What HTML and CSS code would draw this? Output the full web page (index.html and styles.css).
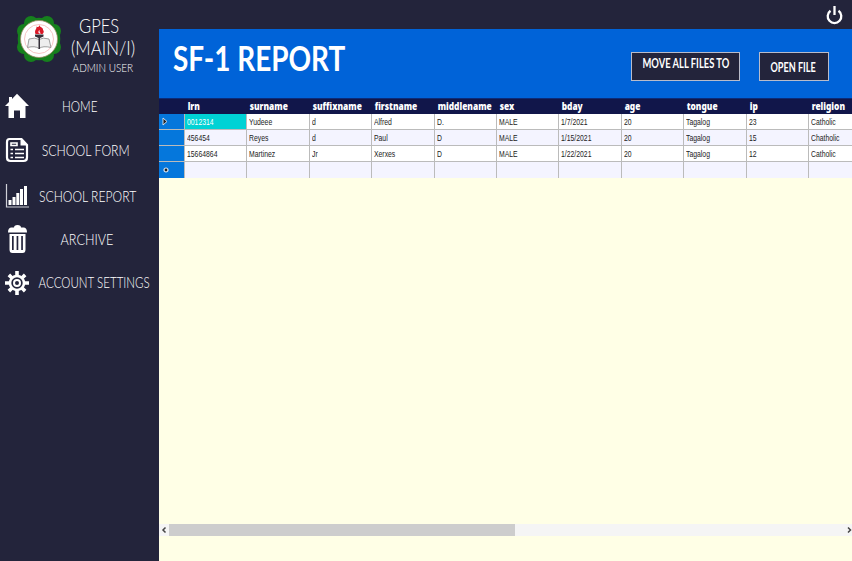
FILE: index.html
```
<!DOCTYPE html>
<html lang="en">
<head>
<meta charset="utf-8">
<title>SF-1 Report</title>
<link rel="stylesheet" href="styles.css">
</head>
<body>
<div class="app">
  <aside class="sidebar">
    <header class="profile">
      <svg class="logo" width="44" height="48" viewBox="0 0 44 48">
        <g fill="#16801d"><circle cx="22" cy="24" r="21.300"/><circle cx="14" cy="8" r="7"/><circle cx="30" cy="8" r="7"/><circle cx="7" cy="16" r="7"/><circle cx="37" cy="16" r="7"/><circle cx="7" cy="32" r="7"/><circle cx="37" cy="32" r="7"/><circle cx="14" cy="40" r="7"/><circle cx="30" cy="40" r="7"/></g>
        <circle cx="22" cy="24" r="18.500" fill="#fff" stroke="#a28b68" stroke-width=".8"/>
        <circle cx="22" cy="24" r="14.500" fill="none" stroke="#f5b5b5" stroke-width=".8"/>
        <path d="M12 24Q18 22 22 24.500Q26 22 32 24L34 32.500Q26 30.500 22 33.500Q18 30.500 10.500 32.500Z" fill="#eee" stroke="#888" stroke-width=".8"/>
        <path d="M18 19.500h8.500V21.500L23 23V34h-1.500V23L18 21.500Z" fill="#353039"/>
        <path d="M18.500 19C17 15 20 14 19.500 11.500C22 13 22 11 22.500 10C23 13 26.500 12 26 15C27.500 16.500 26.500 18 25.500 19Z" fill="#d91928"/>
        <path d="M22 18.500q-1.500-2 .5-3.500q-.5 2 1.500 3.500" fill="#fff"/>
      </svg>
      <div class="who">
        <span class="fit gpes">GPES</span>
        <span class="fit main">(MAIN/I)</span>
        <span class="fit admin">ADMIN USER</span>
      </div>
    </header>
    <nav class="nav">
      <a class="item"><svg class="icon" viewBox="0 0 24 26"><path fill="#fff" d="M12 .8L24 13H20.500V25H15V17.500H9V25H3.500V13H0L4 9V4H7V6Z"/></svg><span class="label"><span class="fit home">HOME</span></span></a>
      <a class="item"><svg class="icon" viewBox="0 0 24 26"><path d="M4.500 2H16.500L22 8V20.500Q22 24 18.500 24H5.500Q2 24 2 20.500V5Q2 2 4.500 2Z" fill="none" stroke="#fff" stroke-width="2.200"/><path d="M15.500 1.500V8.500H23Z" fill="#fff"/><path d="M6 6H12V8.500H6ZM5.500 12.500H8M10 12.500H19M5.500 16.500H8M10 16.500H19M5.500 20.500H8M10 20.500H19" fill="none" stroke="#fff" stroke-width="1.600"/></svg><span class="label"><span class="fit form">SCHOOL FORM</span></span></a>
      <a class="item"><svg class="icon chart" viewBox="0 0 24 26"><path d="M1.500 1V24H24" fill="none" stroke="#cfd0d8" stroke-width="1.200"/><path fill="#fff" d="M3.500 17h3v5h-3zM7.500 14h3v8h-3zM11.300 10h3v12h-3zM15 6h3v16h-3zM19 3h3v19h-3z"/></svg><span class="label"><span class="fit report">SCHOOL REPORT</span></span></a>
      <a class="item"><svg class="icon trash" viewBox="0 0 24 28"><path fill="#fff" fill-rule="evenodd" d="M9 2.500Q9 0 12.500 0T16 2.500H19Q22 3 22 7.500H3Q3 3 6 2.500ZM4.500 9H20.500V24.500Q20.500 28 17.500 28H7.500Q4.500 28 4.500 24.500ZM7 11V25H8.700V11ZM11.600 11V25H13.300V11ZM16.200 11V25H17.900V11Z"/></svg><span class="label"><span class="fit archive">ARCHIVE</span></span></a>
      <a class="item"><svg class="icon" viewBox="-12 -12 24 24"><g stroke="#fff" stroke-width="3.600"><path d="M0-12V-7M0 12V7M-12 0H-7M12 0H7"/><path d="M0-11.500V-7M0 11.500V7M-11.500 0H-7M11.500 0H7" transform="rotate(45)"/></g><circle r="7" fill="none" stroke="#fff" stroke-width="2.600"/><circle r="3" fill="none" stroke="#fff" stroke-width="2"/></svg><span class="label"><span class="fit account">ACCOUNT SETTINGS</span></span></a>
    </nav>
  </aside>
  <main class="content">
    <div class="topbar"><svg class="power" width="17" height="20" viewBox="0 0 17 20"><path d="M4.500 4.800A6.800 6.800 0 1 0 12.500 4.800M8.500 0V9" fill="none" stroke="#fff" stroke-width="2.300"/></svg></div>
    <header class="banner">
      <h1 class="fit title">SF-1 REPORT</h1>
      <button class="btn move"><span class="fit move-text">MOVE ALL FILES TO</span></button>
      <button class="btn open"><span class="fit open-text">OPEN FILE</span></button>
    </header>
    <div class="grid">
      <div class="row head"><b></b><b>lrn</b><b>surname</b><b>suffixname</b><b>firstname</b><b>middlename</b><b>sex</b><b>bday</b><b>age</b><b>tongue</b><b>ip</b><b>religion</b></div>
      <div class="row"><i><svg width="6" height="9" viewBox="0 0 6 9"><path d="M1 1L5 4.500L1 8Z" fill="#222" stroke="#dce8f5" stroke-width=".9"/></svg></i><span class="selected"><em>0012314</em></span><span><em>Yudeee</em></span><span><em>d</em></span><span><em>Alfred</em></span><span><em>D.</em></span><span><em>MALE</em></span><span><em>1/7/2021</em></span><span><em>20</em></span><span><em>Tagalog</em></span><span><em>23</em></span><span><em>Catholic</em></span></div>
      <div class="row alt"><i></i><span><em>456454</em></span><span><em>Reyes</em></span><span><em>d</em></span><span><em>Paul</em></span><span><em>D</em></span><span><em>MALE</em></span><span><em>1/15/2021</em></span><span><em>20</em></span><span><em>Tagalog</em></span><span><em>15</em></span><span><em>Chatholic</em></span></div>
      <div class="row"><i></i><span><em>15664864</em></span><span><em>Martinez</em></span><span><em>Jr</em></span><span><em>Xerxes</em></span><span><em>D</em></span><span><em>MALE</em></span><span><em>1/22/2021</em></span><span><em>20</em></span><span><em>Tagalog</em></span><span><em>12</em></span><span><em>Catholic</em></span></div>
      <div class="row alt"><i><svg width="8" height="8" viewBox="0 0 8 8"><circle cx="4" cy="4" r="2" fill="#222" stroke="#dce8f5" stroke-width="1.200"/></svg></i><span></span><span></span><span></span><span></span><span></span><span></span><span></span><span></span><span></span><span></span><span></span></div>
    </div>
    <div class="scrollbar">
      <svg width="10" height="12" viewBox="0 0 10 12"><path d="M6.500 3.500L4 6L6.500 8.500" fill="none" stroke="#444" stroke-width="1.500"/></svg>
      <div class="thumb"></div>
      <svg class="right" width="8" height="12" viewBox="0 0 8 12"><path d="M4 3.500L6.500 6L4 8.500" fill="none" stroke="#444" stroke-width="1.500"/></svg>
    </div>
  </main>
</div>
</body>
</html>
```
FILE: styles.css
```
* { box-sizing: border-box; }
body { margin: 0; background: #23243b; color: #fff; font-family: Lato, "Open Sans", sans-serif; overflow: hidden; }
.app { display: flex; width: 852px; height: 561px; }
.sidebar { width: 159px; flex: none; background: #23243b; }
.profile { display: flex; height: 84px; padding: 15px 0 0 17px; }
.logo { flex: none; }
.who { width: 84px; display: flex; flex-direction: column; align-items: center; }
.fit { display: inline-block; white-space: nowrap; font-weight: 300; transform-origin: center; }
.gpes, .main { font-size: 19px; line-height: 22px; }
.gpes { transform: translateX(-4px) scaleX(.87); }
.main { transform: scaleX(.89); }
.admin { font-size: 12.500px; line-height: 17px; transform: translateY(-.5px) scaleX(.8); }
.nav { display: flex; flex-direction: column; }
.item { display: flex; align-items: center; height: 44.300px; padding-left: 5px; }
.icon { width: 24px; height: 26px; flex: none; }
.chart { transform: translateY(1px); }
.trash { height: 28px; }
.label { width: 130px; display: flex; justify-content: center; font-size: 15px; line-height: 18px; }
.home { transform: translate(-14px, -.5px) scaleX(.78); }
.form { transform: translateX(-8px) scaleX(.82); }
.report { transform: translate(-6.500px, 1px) scaleX(.81); }
.archive { transform: translateX(-7.500px) scaleX(.84); }
.account { transform: translate(0, -1px) scaleX(.77); }
.content { width: 693px; flex: none; display: flex; flex-direction: column; background: #ffffe6; }
.topbar { height: 29px; background: #23243b; display: flex; justify-content: flex-end; padding: 6px 9px 0 0; }
.banner { height: 69px; background: #0063d8; display: flex; align-items: flex-start; }
.title { flex: none; margin: 9px 0 0 14px; width: 458px; font-size: 34px; line-height: 40px; font-weight: 700; transform: scaleX(.822); transform-origin: left; }
.btn { height: 29px; margin: 23px 0 0; padding: 0; border: 1px solid #b9bccb; background: #23243b; color: #fff; font-family: inherit; display: flex; justify-content: center; flex: none; }
.move { width: 109px; padding-top: 3px; }
.open { width: 70px; margin-left: 19px; padding-top: 7px; }
.btn .fit { font-size: 12.500px; line-height: 16px; font-weight: 700; }
.move-text { transform: scaleX(.75); }
.open-text { transform: translateX(-1px) scaleX(.73); }
.grid { width: 693px; overflow: hidden; flex: none; }
.row { display: grid; grid-template-columns: 26px repeat(11, 62.400px); grid-template-rows: 16px; height: 16px; background: #fff; color: #222; }
.head { background: #11164a; border-top: 1px solid #0c2b78; color: #fff; font: 700 11px/14px "Noto Sans", sans-serif; }
.head b { padding-left: 3.500px; transform: scaleX(.76); transform-origin: left; }
.alt { background: #f4f4ff; }
.row > i { background: #0577dc; border-right: 1px solid #bbb; border-bottom: 1px solid #bbb; display: flex; align-items: center; padding-left: 3px; }
.row > span { border-right: 1px solid #bbb; border-bottom: 1px solid #bbb; padding-left: 2px; font: 9.500px/16px "Liberation Sans", sans-serif; }
.row em { display: inline-block; font-style: normal; white-space: nowrap; transform: scaleX(.72); transform-origin: left; }
.row:last-child > * { border-bottom: 0; }
.row > .selected { background: #00d2d5; color: #fff; }
.scrollbar { margin-top: 346px; height: 12px; display: flex; background: #f5f5f5; }
.thumb { width: 346px; background: #cdcdcd; }
.right { margin-left: auto; }
```
